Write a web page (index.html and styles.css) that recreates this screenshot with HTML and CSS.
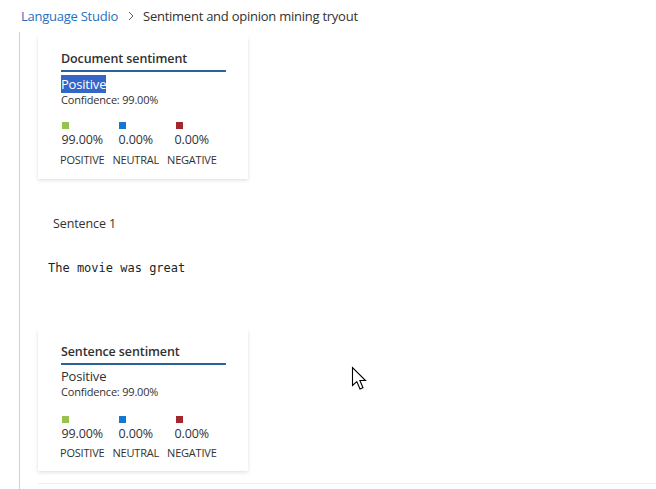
FILE: index.html
```html
<!DOCTYPE html>
<html lang="en">
<head>
<meta charset="utf-8">
<link rel="stylesheet" href="styles.css">
</head>
<body>
<nav class="crumbs">
  <a class="crumb-link">Language Studio</a>
  <span class="chev">
    <svg width="8" height="10" viewBox="0 0 8 10"><path d="M2 1 L6 5 L2 9" fill="none" stroke="#605e5c" stroke-width="1"/></svg>
  </span>
  <span class="crumb-current">Sentiment and opinion mining tryout</span>
</nav>
<main class="content">
  <section class="card card-doc">
    <h3 class="card-title">Document sentiment</h3>
    <div class="label-main"><span class="selected">Positive</span></div>
    <div class="confidence">Confidence: 99.00%</div>
    <div class="legend">
      <div class="col"><div class="val"><span class="sq sq-pos"></span><span>99.00%</span></div><div class="cap">POSITIVE</div></div>
      <div class="col"><div class="val"><span class="sq sq-neu"></span><span>0.00%</span></div><div class="cap">NEUTRAL</div></div>
      <div class="col"><div class="val"><span class="sq sq-neg"></span><span>0.00%</span></div><div class="cap">NEGATIVE</div></div>
    </div>
  </section>

  <div class="sentence-title">Sentence 1</div>
  <div class="sentence-text">The movie was great</div>

  <section class="card card-sent">
    <h3 class="card-title">Sentence sentiment</h3>
    <div class="label-main">Positive</div>
    <div class="confidence">Confidence: 99.00%</div>
    <div class="legend">
      <div class="col"><div class="val"><span class="sq sq-pos"></span><span>99.00%</span></div><div class="cap">POSITIVE</div></div>
      <div class="col"><div class="val"><span class="sq sq-neu"></span><span>0.00%</span></div><div class="cap">NEUTRAL</div></div>
      <div class="col"><div class="val"><span class="sq sq-neg"></span><span>0.00%</span></div><div class="cap">NEGATIVE</div></div>
    </div>
  </section>
  <div class="divider"></div>
</main>
<svg class="cursor" width="20" height="28" viewBox="0 0 20 28">
  <path d="M1.5 1.5 L1.5 19.5 L5.8 15.6 L9 23 L12 21.7 L8.9 14.5 L14.5 14.5 Z" fill="#fff" stroke="#000" stroke-width="1.1" stroke-linejoin="miter"/>
</svg>
</body>
</html>
```
FILE: styles.css
```css
* { box-sizing: border-box; }
html, body { margin: 0; padding: 0; background: #fff; }
body {
  font-family: "Open Sans", "Noto Sans", sans-serif;
  color: #323130;
  width: 656px;
  height: 489px;
  overflow: hidden;
  position: relative;
}
.crumbs {
  height: 32px;
  display: flex;
  align-items: center;
  padding-left: 21px;
  font-size: 13px;
  letter-spacing: -0.25px;
}
.crumb-link { color: #1f6fc0; }
.chev { display: inline-flex; margin: 0 8px 0 9px; }
.crumb-current { color: #323130; }

.content {
  margin-left: 19px;
  border-left: 1px solid #d2d0ce;
  padding-left: 18px;
  padding-top: 4px;
  height: 457px;
}
.card {
  width: 210px;
  background: #fff;
  box-shadow: 0 1.6px 3.6px rgba(0,0,0,0.13), 0 0.3px 0.9px rgba(0,0,0,0.11);
  padding: 14px 22px 12px 23px;
}
.card-title {
  margin: 0;
  font-size: 12.5px;
  font-weight: 600;
  line-height: 18px;
  padding-bottom: 2px;
  border-bottom: 2px solid #2a629c;
  letter-spacing: -0.1px;
}
.label-main {
  margin-top: 4px;
  font-size: 13px;
  line-height: 17px;
  letter-spacing: -0.2px;
}
.card-sent .label-main { margin-top: 3px; }
.selected { background: #3465c8; color: #fff; }
.confidence {
  font-size: 11px;
  line-height: 14px;
  letter-spacing: -0.2px;
}
.legend {
  display: flex;
  gap: 8px;
  margin-top: 15px;
  margin-left: -1px;
}
.card-sent .legend { margin-top: 17px; }
.col { display: flex; flex-direction: column; align-items: center; }
.val { display: flex; flex-direction: column; align-items: flex-start; font-size: 12.5px; line-height: 16px; letter-spacing: -0.1px; }
.sq { display: block; width: 7px; height: 7px; margin-bottom: 3px; margin-left: 1px; }
.sq-pos { background: #98c24c; }
.sq-neu { background: #1478d0; }
.sq-neg { background: #a3272f; }
.cap { font-size: 11px; line-height: 14px; margin-top: 5px; letter-spacing: -0.2px; }
.card-sent .cap { margin-top: 4px; }

.sentence-title {
  margin-top: 37px;
  margin-left: 15px;
  font-size: 12.5px;
  line-height: 16px;
  letter-spacing: -0.1px;
}
.sentence-text {
  margin-top: 28px;
  margin-left: 10px;
  font-family: "DejaVu Sans Mono", "Liberation Mono", monospace;
  font-size: 12px;
  line-height: 16px;
  color: #201f1e;
}
.card-sent { margin-top: 53px; padding-bottom: 11px; }
.divider { margin-top: 12px; height: 1px; background: #f0efee; }
.cursor { position: absolute; left: 351px; top: 366px; }
```
